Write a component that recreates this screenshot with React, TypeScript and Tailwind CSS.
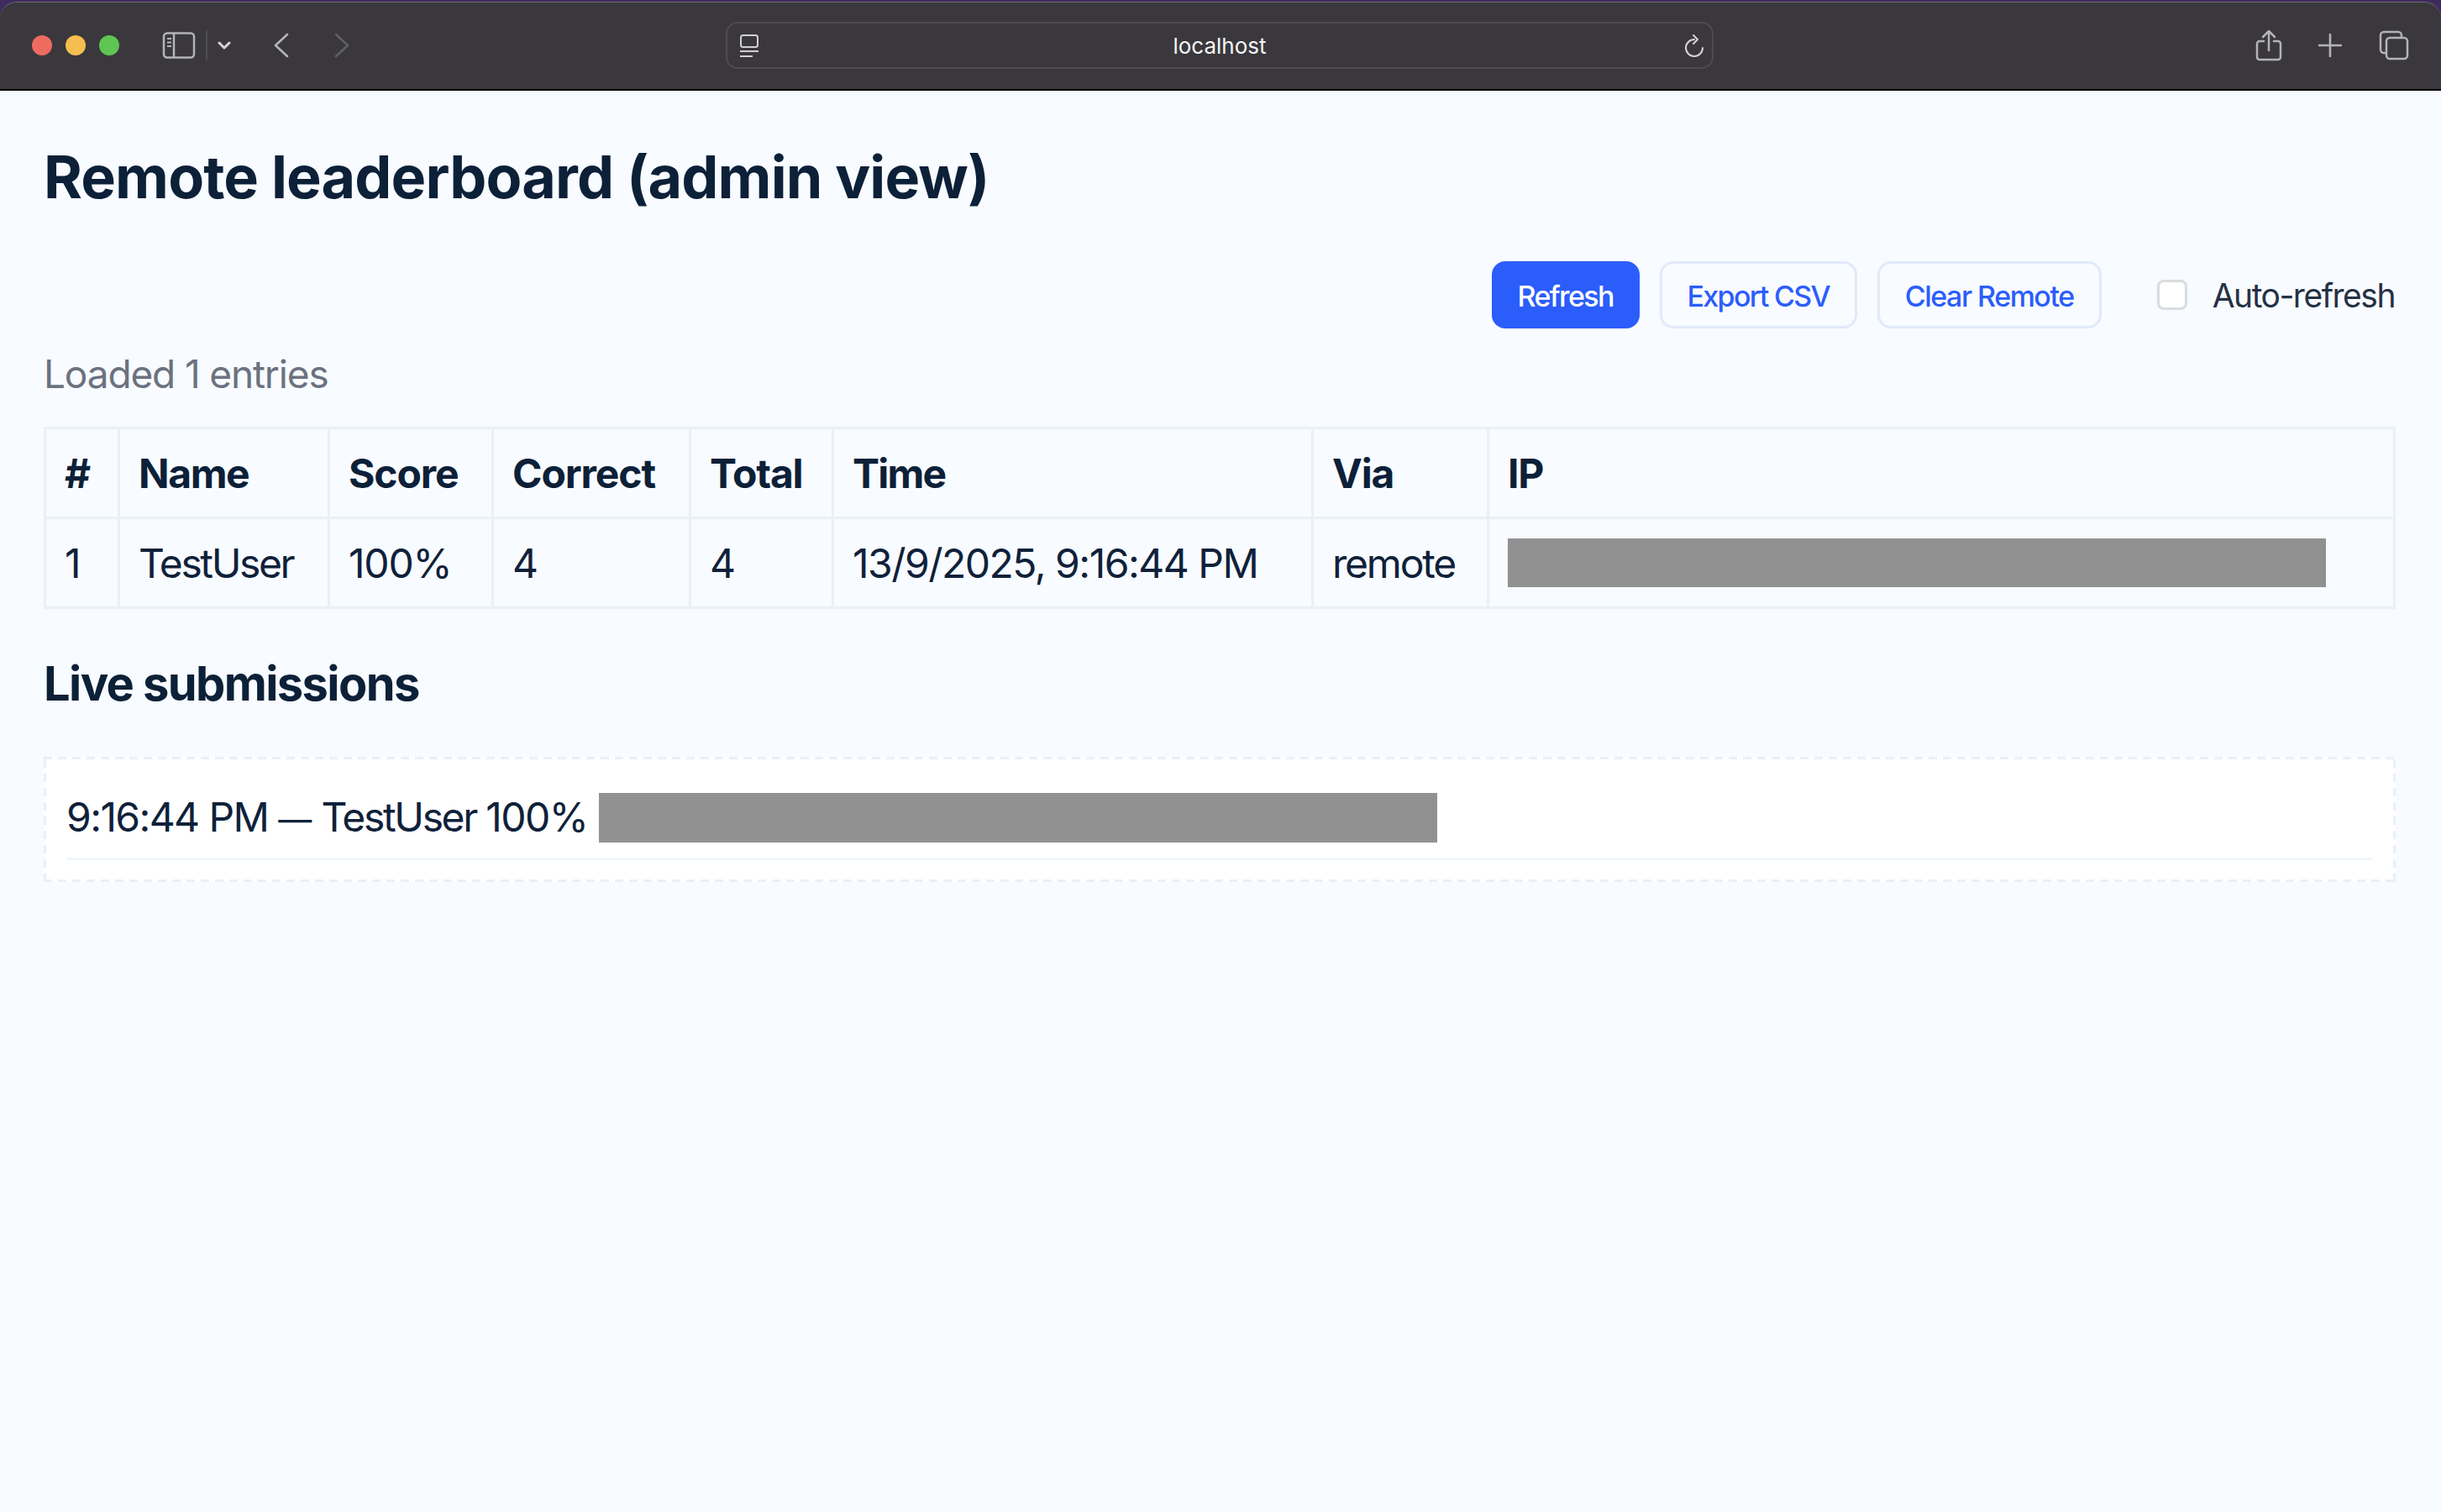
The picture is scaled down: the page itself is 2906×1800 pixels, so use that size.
export default function App() {
  const cols = [88, 250, 195, 235, 170, 571, 209, 1079];
  const head = [
    { t: "#", c: "tracking-[-1.2px]" },
    { t: "Name", c: "tracking-[-1.4px]" },
    { t: "Score", c: "tracking-[-1.1px]" },
    { t: "Correct", c: "tracking-[-1.1px]" },
    { t: "Total", c: "tracking-[-1.2px]" },
    { t: "Time", c: "tracking-[-1.8px]" },
    { t: "Via", c: "tracking-[-1.2px]" },
    { t: "IP", c: "tracking-[-1.2px]" },
  ];
  const row = [
    { t: "1", c: "tracking-[-1.5px]" },
    { t: "TestUser", c: "tracking-[-2.4px]" },
    { t: "100%", c: "tracking-[-1.2px]" },
    { t: "4", c: "tracking-[-1.5px]" },
    { t: "4", c: "tracking-[-1.5px]" },
    { t: "13/9/2025, 9:16:44 PM", c: "tracking-[-1.5px]" },
    { t: "remote", c: "tracking-[-2.2px]" },
  ];
  return (
    <div className="w-[2906px] h-[1800px] overflow-hidden bg-[#f8fbff] text-[#0f213a] font-['Inter',sans-serif]">
      <div className="h-[108px] bg-[#3f2a5e]">
        <div className="h-[108px] pt-[2px]">
          <div className="relative flex h-[106px] items-center rounded-t-[20px] border-t border-[#6b6a6f] border-b-2 border-b-[#000] bg-[#3a383d] pb-[2px]">
            <div className="ml-[38px] flex gap-[16px]">
              <span className="h-[24px] w-[24px] rounded-full bg-[#ee6b60]" />
              <span className="h-[24px] w-[24px] rounded-full bg-[#f6be4f]" />
              <span className="h-[24px] w-[24px] rounded-full bg-[#5fc553]" />
            </div>
            <svg className="ml-[51px]" width="40" height="32" viewBox="0 0 40 32" fill="none" stroke="#b4b3b6" strokeWidth="2.5">
              <rect x="2" y="1.5" width="36" height="29" rx="4" />
              <path d="M14 2v28" />
              <path d="M6 8h5M6 12.5h5M6 17h5" strokeWidth="2" />
            </svg>
            <span className="ml-[12px] h-[36px] w-[2px] bg-[#4e4d51]" />
            <svg className="ml-[12px]" width="16" height="10" viewBox="0 0 16 10" fill="none" stroke="#d5d4d6" strokeWidth="3" strokeLinecap="round" strokeLinejoin="round">
              <path d="M2 2l6 6 6-6" />
            </svg>
            <svg className="ml-[51px]" width="18" height="30" viewBox="0 0 18 30" fill="none" stroke="#b4b3b6" strokeWidth="2.6" strokeLinecap="round" strokeLinejoin="round">
              <path d="M16 2L2 15l14 13" />
            </svg>
            <svg className="ml-[54px]" width="18" height="30" viewBox="0 0 18 30" fill="none" stroke="#5f5e62" strokeWidth="2.6" strokeLinecap="round" strokeLinejoin="round">
              <path d="M2 2l14 13L2 28" />
            </svg>
            <div className="absolute left-[864px] top-[23px] flex h-[56px] w-[1176px] items-center justify-center rounded-[14px] border-2 border-[#4d4b50]">
              <svg className="absolute left-[14px] top-[13px]" width="24" height="28" viewBox="0 0 24 28" fill="none" stroke="#d0cfd1" strokeWidth="2">
                <rect x="2" y="1" width="20" height="14" rx="2.5" />
                <path d="M1 20h22" />
                <path d="M1 26h15" />
              </svg>
              <span className="text-[26px] text-[#f5f5f5]">localhost</span>
              <svg className="absolute right-[8px] top-[12px]" width="26" height="30" viewBox="0 0 26 30" fill="none" stroke="#d5d4d6" strokeWidth="2" strokeLinecap="round" strokeLinejoin="round">
                <path d="M13 7a10 10 0 1 0 10 10" />
                <path d="M12 2l5 5-5 5" />
              </svg>
            </div>
            <div className="ml-auto mr-[38px] flex items-center">
              <svg width="32" height="38" viewBox="0 0 32 38" fill="none" stroke="#b4b3b6" strokeWidth="2.5" strokeLinecap="round" strokeLinejoin="round">
                <path d="M10 14H5a3 3 0 0 0-3 3v16a3 3 0 0 0 3 3h22a3 3 0 0 0 3-3V17a3 3 0 0 0-3-3h-5" />
                <path d="M16 25V2M9 9l7-7 7 7" />
              </svg>
              <svg className="ml-[43px]" width="28" height="28" viewBox="0 0 28 28" fill="none" stroke="#b4b3b6" strokeWidth="2.6" strokeLinecap="round">
                <path d="M14 1v26M1 14h26" />
              </svg>
              <svg className="ml-[44px]" width="36" height="36" viewBox="0 0 36 36" fill="none" stroke="#b4b3b6" strokeWidth="2.5">
                <path d="M8 27H6a4 4 0 0 1-4-4V6a4 4 0 0 1 4-4h17a4 4 0 0 1 4 4v2" />
                <rect x="9" y="9" width="25" height="25" rx="4" />
              </svg>
            </div>
          </div>
        </div>
      </div>

      <div className="px-[52px]">
        <h1 className="mt-[61px] text-[70px] font-bold leading-[84px] tracking-[-0.85px] text-[#0c2038]">
          Remote leaderboard (admin view)
        </h1>
        <div className="mt-[58px] flex h-[80px] items-center justify-end pr-[3px]">
          <button className="h-[80px] w-[176px] rounded-[16px] bg-[#2b5dfb] pt-[2px] text-[34px] font-medium tracking-[-1.6px] text-white">Refresh</button>
          <button className="ml-[24px] h-[80px] w-[235px] rounded-[16px] border-[3px] border-[#e2e9fb] pt-[2px] text-[34px] font-medium tracking-[-1.7px] text-[#2b5dfb]">Export CSV</button>
          <button className="ml-[24px] h-[80px] w-[267px] rounded-[16px] border-[3px] border-[#e2e9fb] pt-[2px] text-[34px] font-medium tracking-[-1.5px] text-[#2b5dfb]">Clear Remote</button>
          <span className="ml-[66px] h-[36px] w-[36px] rounded-[8px] border-[3px] border-[#d9dcdf] bg-white" />
          <span className="ml-[30px] pt-[2px] text-[39px] tracking-[-1.5px] text-[#253144]">Auto-refresh</span>
        </div>
        <div className="mt-[23px] text-[46px] leading-[62px] tracking-[-1.15px] text-[#6b7280]">Loaded 1 entries</div>
        <table className="mt-[32px] w-[2797px] table-fixed border-collapse border-[3px] border-[#e9f0f8]">
          <colgroup>
            {cols.map((w, i) => (
              <col key={i} style={{ width: w }} />
            ))}
          </colgroup>
          <thead>
            <tr className="h-[107px]">
              {head.map((h) => (
                <th key={h.t} className={`border-[3px] border-[#e9f0f8] pl-[22px] pr-[23px] pt-[2px] text-left text-[48px] font-bold text-[#0c2038] ${h.c}`}>
                  {h.t}
                </th>
              ))}
            </tr>
          </thead>
          <tbody>
            <tr className="h-[107px]">
              {row.map((c, i) => (
                <td key={i} className={`border-[3px] border-[#e9f0f8] pl-[22px] pr-[23px] pt-[2px] text-[48px] text-[#0f213a] ${c.c}`}>
                  {c.t}
                </td>
              ))}
              <td className="border-[3px] border-[#e9f0f8] pl-[22px] pr-[23px]">
                <div className="h-[58px] w-[974px] bg-[#919191]" />
              </td>
            </tr>
          </tbody>
        </table>
        <h2 className="mt-[52px] text-[56px] font-bold leading-[74px] tracking-[-1.6px] text-[#0c2038]">Live submissions</h2>
        <div className="mt-[50px] h-[149px] w-[2800px] px-[27px] pt-[3px] [background:repeating-linear-gradient(90deg,#e9f0f8_0_10px,transparent_10px_17px)_top/100%_3px_no-repeat,repeating-linear-gradient(90deg,#e9f0f8_0_10px,transparent_10px_17px)_bottom/100%_3px_no-repeat,repeating-linear-gradient(0deg,#e9f0f8_0_10px,transparent_10px_17px)_left/3px_100%_no-repeat,repeating-linear-gradient(0deg,#e9f0f8_0_10px,transparent_10px_17px)_right/3px_100%_no-repeat,#ffffff]">
          <div className="flex h-[120px] items-end border-b-[3px] border-[#f1f6fc] pb-[18px]">
            <span className="-mb-[3px] text-[48px] leading-[60px] tracking-[-2.35px] text-[#0f213a]">
              <span className="tracking-[-1.6px]">9:16:44 PM </span>
              <span className="text-[40px] tracking-[0px]">— </span>
              TestUser <span className="tracking-[-1.5px]">100%</span> (
            </span>
            <div className="-ml-[13px] h-[59px] w-[998px] bg-[#919191]" />
          </div>
        </div>
      </div>
    </div>
  );
}
